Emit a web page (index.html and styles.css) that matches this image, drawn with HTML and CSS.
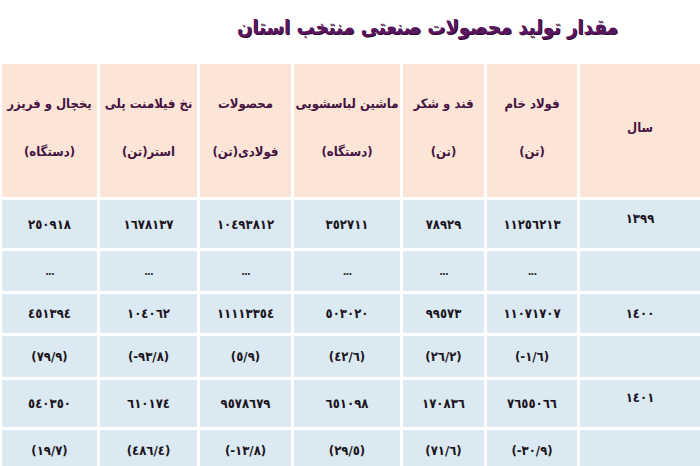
FILE: index.html
```html
<!DOCTYPE html>
<html lang="fa" dir="rtl">
<head>
<meta charset="utf-8">
<title>مقدار تولید محصولات صنعتی منتخب استان</title>
<link rel="stylesheet" href="styles.css">
</head>
<body>
<div class="page">
  <h1 class="title">مقدار تولید محصولات صنعتی منتخب استان</h1>
  <div class="table">
    <div class="cell head">سال</div>
    <div class="cell head">فولاد خام<br>(تن)</div>
    <div class="cell head">قند و شکر<br>(تن)</div>
    <div class="cell head">ماشین لباسشویی<br>(دستگاه)</div>
    <div class="cell head">محصولات<br>فولادی(تن)</div>
    <div class="cell head">نخ فیلامنت پلی<br>استر(تن)</div>
    <div class="cell head">یخچال و فریزر<br>(دستگاه)</div>

    <div class="cell year top"><span class="num">١٣٩٩</span></div>
    <div class="cell"><span class="num">١١٢٥٦٢١٣</span></div>
    <div class="cell"><span class="num">٧٨٩٢٩</span></div>
    <div class="cell"><span class="num">٣٥٢٧١١</span></div>
    <div class="cell"><span class="num">١٠٤٩٣٨١٢</span></div>
    <div class="cell"><span class="num">١٦٧٨١٣٧</span></div>
    <div class="cell"><span class="num">٢٥٠٩١٨</span></div>

    <div class="cell year"></div>
    <div class="cell dots">...</div>
    <div class="cell dots">...</div>
    <div class="cell dots">...</div>
    <div class="cell dots">...</div>
    <div class="cell dots">...</div>
    <div class="cell dots">...</div>

    <div class="cell year"><span class="num">١٤٠٠</span></div>
    <div class="cell"><span class="num">١١٠٧١٧٠٧</span></div>
    <div class="cell"><span class="num">٩٩٥٧٣</span></div>
    <div class="cell"><span class="num">٥٠٣٠٢٠</span></div>
    <div class="cell"><span class="num">١١١١٣٣٥٤</span></div>
    <div class="cell"><span class="num">١٠٤٠٦٢</span></div>
    <div class="cell"><span class="num">٤٥١٣٩٤</span></div>

    <div class="cell year"></div>
    <div class="cell"><span class="num">(-١/٦)</span></div>
    <div class="cell"><span class="num">(٢٦/٢)</span></div>
    <div class="cell"><span class="num">(٤٢/٦)</span></div>
    <div class="cell"><span class="num">(٥/٩)</span></div>
    <div class="cell"><span class="num">(-٩٣/٨)</span></div>
    <div class="cell"><span class="num">(٧٩/٩)</span></div>

    <div class="cell year top"><span class="num">١٤٠١</span></div>
    <div class="cell"><span class="num">٧٦٥٥٠٦٦</span></div>
    <div class="cell"><span class="num">١٧٠٨٣٦</span></div>
    <div class="cell"><span class="num">٦٥١٠٩٨</span></div>
    <div class="cell"><span class="num">٩٥٧٨٦٧٩</span></div>
    <div class="cell"><span class="num">٦١٠١٧٤</span></div>
    <div class="cell"><span class="num">٥٤٠٣٥٠</span></div>

    <div class="cell year"></div>
    <div class="cell"><span class="num">(-٣٠/٩)</span></div>
    <div class="cell"><span class="num">(٧١/٦)</span></div>
    <div class="cell"><span class="num">(٢٩/٥)</span></div>
    <div class="cell"><span class="num">(-١٣/٨)</span></div>
    <div class="cell"><span class="num">(٤٨٦/٤)</span></div>
    <div class="cell"><span class="num">(١٩/٧)</span></div>
  </div>
</div>
</body>
</html>
```
FILE: styles.css
```css
html, body {
  margin: 0;
  padding: 0;
  background: #ffffff;
  overflow: hidden;
}

.page {
  width: 700px;
  height: 466px;
  overflow: hidden;
  font-family: "DejaVu Sans", sans-serif;
}

.title {
  margin: 0;
  height: 64px;
  padding-right: 82px;
  box-sizing: border-box;
  display: flex;
  align-items: center;
  font-family: "DejaVu Sans Condensed", "DejaVu Sans", sans-serif;
  font-size: 20px;
  font-weight: bold;
  color: #5b1560;
  text-shadow: 1px 1px 0 #2a0a2a;
  padding-bottom: 10px;
}

.table {
  display: grid;
  direction: rtl;
  margin-left: 2px;
  width: 698px;
  grid-template-columns: 120px 90px 81px 106px 91px 97px 95px;
  grid-template-rows: 133px 48px 40px 39px 41px 47px 40px;
  gap: 3px;
}

.cell {
  background: #dbe9f2;
  display: flex;
  align-items: center;
  justify-content: center;
  text-align: center;
  font-family: "DejaVu Sans Condensed", "DejaVu Sans", sans-serif;
  font-weight: bold;
  font-size: 13px;
  color: #1b1420;
}

.head {
  background: #fce5d7;
  font-size: 13px;
  line-height: 48px;
  color: #451340;
  padding-bottom: 6px;
  box-sizing: border-box;
}

.year.top {
  padding-bottom: 12px;
  box-sizing: border-box;
}

.num {
  direction: ltr;
  unicode-bidi: isolate;
  letter-spacing: -0.5px;
}

.dots {
  font-size: 11px;
  letter-spacing: -1px;
  color: #333333;
}
```
